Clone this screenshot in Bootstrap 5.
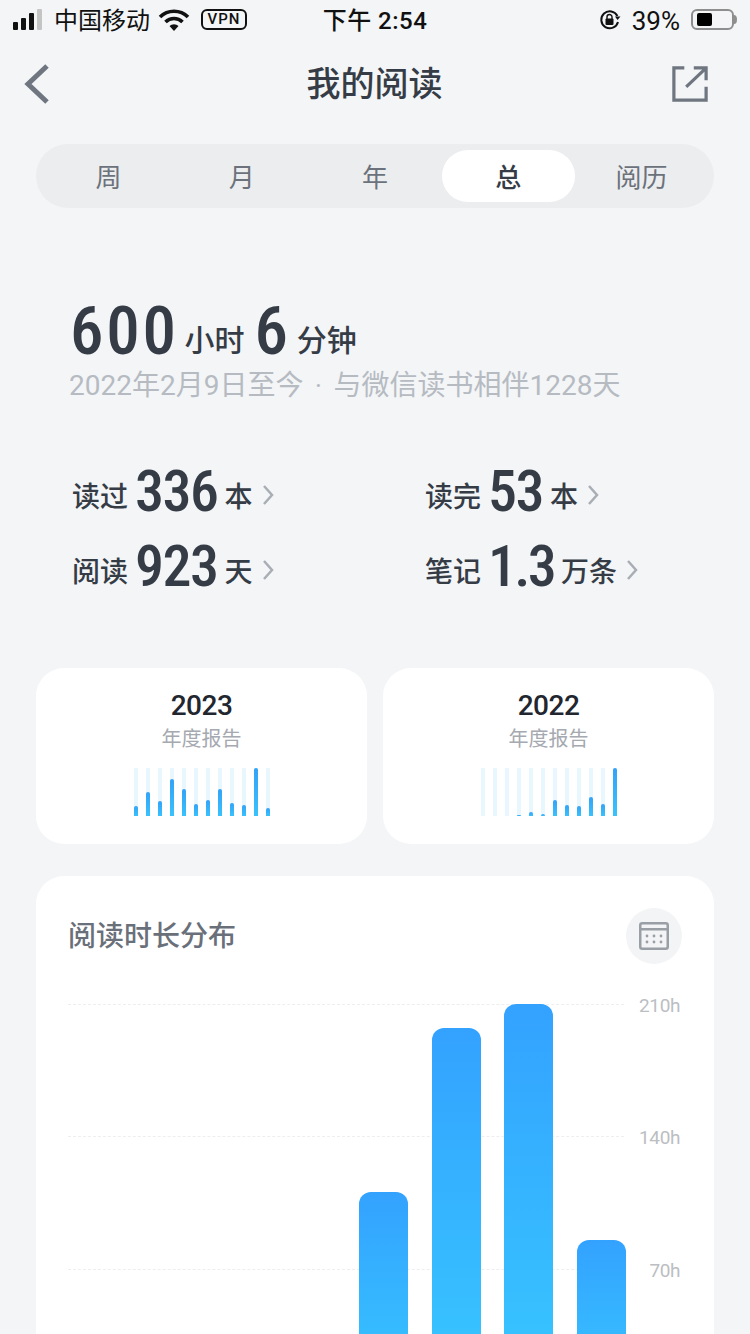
<!DOCTYPE html>
<html lang="zh-CN">
  <head>
    <meta charset="UTF-8" />
    <meta name="viewport" content="width=device-width, initial-scale=1.0" />
    <link rel="stylesheet" href="https://cdn.jsdelivr.net/npm/bootstrap@5.3.0/dist/css/bootstrap.min.css" />
    <title>我的阅读</title>
    <style>
      body {
        width: 750px;
        height: 1334px;
        overflow: hidden;
        background: #f3f5f7;
        color: #353c46;
        font-family: Roboto, "Noto Sans CJK SC", sans-serif;
      }
      .status-bar {
        height: 40px;
        padding: 0 13px 1px;
        color: #111;
        font-size: 24px;
      }
      .status-bar span, .clock { padding-top: 2px; }
      .status-side { width: 270px; }
      .signal { height: 21px; gap: 3px; }
      .signal i { width: 5px; background: #111; border-radius: 1px; }
      .signal i:last-child { background: #c4c4c4; }
      .status-bar .vpn {
        border: 2px solid #111;
        border-radius: 6px;
        font-size: 15px;
        font-weight: 500;
        letter-spacing: 1px;
        width: 46px;
        height: 21px;
        line-height: 17px;
        padding: 0;
        margin-left: 11px;
      }
      .clock { font-weight: 500; letter-spacing: 0.5px; }
      .pct { font-size: 26px; line-height: 30px; margin-left: 11px; margin-right: 11px; }
      .battery {
        width: 43px;
        height: 21px;
        border: 2px solid #8e8e8e;
        border-radius: 6px;
        padding: 2px 2px 2px 4px;
      }
      .battery i { display: block; width: 15px; height: 13px; background: #000; border-radius: 2px; }
      .top-nav { height: 84px; padding: 4px 42px 0; }
      .back-icon { margin-left: -18px; margin-right: 27px; }
      .top-title { font-size: 34px; font-weight: 500; }
      .segments {
        margin: 20px 36px 0;
        height: 64px;
        padding: 6px;
        border-radius: 32px;
        background: #ebedef;
      }
      .segments div {
        flex: 1;
        height: 52px;
        font-size: 26px;
        color: #6c727b;
        line-height: 56px;
        text-align: center;
        border-radius: 26px;
      }
      .segments .on { background: #fff; color: #353c46; font-weight: 500; }
      .hero { padding: 89px 0 0 69px; }
      .hero-line { height: 68px; line-height: 68px; white-space: nowrap; }
      .hero-num {
        font-size: 67px;
        font-weight: 500;
        font-stretch: 83%;
        letter-spacing: 2.7px;
        margin-left: 1px;
      }
      .hero-unit {
        font-size: 30px;
        font-weight: 500;
        vertical-align: 3px;
        margin: 0 9px 0 6px;
      }
      .hero-sub { font-size: 28px; line-height: 42px; color: #b6bbc2; white-space: nowrap; }
      .hero-sub em { font-style: normal; }
      .hero-dot { display: inline-block; width: 30px; text-align: center; }
      .stats {
        display: grid;
        grid-template-columns: 353px auto;
        row-gap: 16.5px;
        padding: 55px 0 0 72px;
      }
      .stat { height: 58px; line-height: 58px; white-space: nowrap; }
      .stat span { font-size: 28px; font-weight: 500; vertical-align: 4px; }
      .stat b {
        font-size: 58px;
        font-weight: 500;
        font-stretch: 75%;
        letter-spacing: -1.5px;
        margin: 0 7px 0 7px;
      }
      .stat b.tight { letter-spacing: -2.7px; }
      .stat svg { margin-left: 9px; vertical-align: 6px; }
      .reports { padding: 0 36px; margin-top: 73px; gap: 16px; }
      .report {
        flex: 1;
        height: 176px;
        border-radius: 28px;
        background: #fff;
        padding-top: 20px;
      }
      .report-year { font-size: 28px; font-weight: 500; font-stretch: 95%; line-height: 36px; color: #22262e; letter-spacing: -0.5px; }
      .report-tag { font-size: 20px; line-height: 30px; color: #a5a9b0; }
      .mini { height: 48px; margin-top: 14px; gap: 8px; }
      .mini i { width: 4px; background: #e8f6fe; display: flex; align-items: flex-end; }
      .mini u { display: block; width: 4px; border-radius: 2px 2px 0 0; background: linear-gradient(#33a2f8, #38c2fd); }
      .dist {
        margin: 32px 36px 0;
        height: 526px;
        border-radius: 28px;
        background: #fff;
        padding: 32px 32px 0;
      }
      .dist-title { font-size: 28px; font-weight: 500; color: #6a707a; padding-top: 3px; }
      .cal-btn { width: 56px; height: 56px; border-radius: 50%; background: #f3f4f6; }
      .plot { margin-top: 40px; height: 398px; }
      .axis { position: absolute; inset: 0 0 auto 0; }
      .axis-row { height: 132.5px; gap: 14px; color: #bbbec3; font-size: 19px; line-height: 2px; }
      .axis-row hr { flex: 1; margin: 0; border: 0; border-top: 1px dashed #eceef0; opacity: 1; }
      .axis-row span { width: 44px; padding-right: 2px; padding-top: 1px; letter-spacing: -0.4px; }
      .plot-bars { width: 558px; height: 398px; position: relative; }
      .plot-bars i {
        width: 49px;
        border-radius: 12px 12px 0 0;
        background: linear-gradient(#33a2ff, #38c8ff);
      }
    </style>
  </head>
  <body>
    <div class="status-bar d-flex align-items-center justify-content-between">
      <div class="status-side d-flex align-items-center">
        <div class="signal d-flex align-items-end">
          <i style="height: 8px"></i><i style="height: 12px"></i><i style="height: 17px"></i><i style="height: 21px"></i>
        </div>
        <span class="ms-2 ps-1">中国移动</span>
        <svg class="ms-2" width="32" height="22" viewBox="0 0 32 22">
          <path d="M2 8 A20 20 0 0 1 30 8" fill="none" stroke="#111" stroke-width="3.6" />
          <path d="M7.5 13 A12 12 0 0 1 24.5 13" fill="none" stroke="#111" stroke-width="3.6" />
          <path d="M11.5 17 A6.5 6.5 0 0 1 20.5 17 L16 22 Z" fill="#111" />
        </svg>
        <span class="vpn text-center">VPN</span>
      </div>
      <div class="clock">下午 2:54</div>
      <div class="status-side d-flex align-items-center justify-content-end">
        <svg width="22" height="22" viewBox="0 0 22 22">
          <path d="M19 13 A8.5 8.5 0 1 1 18.4 7" fill="none" stroke="#111" stroke-width="2" />
          <path d="M21.5 7.5 L16 7.5 L18.5 11 Z" fill="#111" />
          <rect x="6.5" y="9.5" width="8" height="6.5" rx="1" fill="#111" />
          <path d="M8 10 V8 A2.5 2.5 0 0 1 13 8 V10" fill="none" stroke="#111" stroke-width="1.4" />
        </svg>
        <span class="pct">39%</span>
        <div class="battery"><i></i></div>
        <svg width="3" height="9" viewBox="0 0 3 9"><path d="M0 0 A3 4.5 0 0 1 0 9 Z" fill="#8e8e8e" /></svg>
      </div>
    </div>

    <div class="top-nav d-flex align-items-center justify-content-between">
      <svg class="back-icon" width="26" height="40" viewBox="0 0 26 40">
        <path d="M23 2 L4 20 L23 38" fill="none" stroke="#6f7680" stroke-width="5" />
      </svg>
      <div class="top-title">我的阅读</div>
      <svg width="36" height="36" viewBox="0 0 38 38">
        <path d="M13 2 H2 V36 H36 V22" fill="none" stroke="#6f7680" stroke-width="3.4" />
        <path d="M15 22 L35 3 M23 2 H36 V15" fill="none" stroke="#6f7680" stroke-width="3.4" />
      </svg>
    </div>

    <div class="segments d-flex">
      <div>周</div>
      <div>月</div>
      <div>年</div>
      <div class="on">总</div>
      <div>阅历</div>
    </div>

    <div class="hero">
      <div class="hero-line"><span class="hero-num">600</span><span class="hero-unit">小时</span><span class="hero-num">6</span><span class="hero-unit">分钟</span></div>
      <div class="hero-sub"><em>2022</em>年<em>2</em>月<em>9</em>日至今<span class="hero-dot">·</span>与微信读书相伴<em>1228</em>天</div>
    </div>

    <div class="stats">
      <div class="stat"><span>读过</span><b>336</b><span>本</span><svg width="12" height="20" viewBox="0 0 12 20"><path d="M2 1 L10 10 L2 19" fill="none" stroke="#a9aeb5" stroke-width="2.5" /></svg></div>
      <div class="stat"><span>读完</span><b>53</b><span>本</span><svg width="12" height="20" viewBox="0 0 12 20"><path d="M2 1 L10 10 L2 19" fill="none" stroke="#a9aeb5" stroke-width="2.5" /></svg></div>
      <div class="stat"><span>阅读</span><b>923</b><span>天</span><svg width="12" height="20" viewBox="0 0 12 20"><path d="M2 1 L10 10 L2 19" fill="none" stroke="#a9aeb5" stroke-width="2.5" /></svg></div>
      <div class="stat"><span>笔记</span><b class="tight">1.3</b><span>万条</span><svg width="12" height="20" viewBox="0 0 12 20"><path d="M2 1 L10 10 L2 19" fill="none" stroke="#a9aeb5" stroke-width="2.5" /></svg></div>
    </div>

    <div class="reports d-flex">
      <div class="report text-center">
        <div class="report-year">2023</div>
        <div class="report-tag">年度报告</div>
        <div class="mini d-flex justify-content-center" data-bars="10,24,15,37,27,12,16,27,13,11,48,8"></div>
      </div>
      <div class="report text-center">
        <div class="report-year">2022</div>
        <div class="report-tag">年度报告</div>
        <div class="mini d-flex justify-content-center" data-bars="0,0,0,1,4,2,16,11,10,19,12,48"></div>
      </div>
    </div>

    <div class="dist">
      <div class="d-flex align-items-center justify-content-between">
        <div class="dist-title">阅读时长分布</div>
        <div class="cal-btn d-flex align-items-center justify-content-center">
          <svg width="30" height="28" viewBox="0 0 30 28">
            <rect x="1.25" y="1.25" width="27.5" height="25.5" rx="2" fill="none" stroke="#9a9fa6" stroke-width="2.5" />
            <rect x="1" y="6" width="28" height="2.5" fill="#9a9fa6" />
            <g fill="#9a9fa6">
              <circle cx="8" cy="14" r="1.4" /><circle cx="15" cy="14" r="1.4" /><circle cx="22" cy="14" r="1.4" />
              <circle cx="8" cy="20" r="1.4" /><circle cx="15" cy="20" r="1.4" /><circle cx="22" cy="20" r="1.4" />
            </g>
          </svg>
        </div>
      </div>
      <div class="plot position-relative">
        <div class="axis">
          <div class="axis-row d-flex align-items-start"><hr /><span class="text-end">210h</span></div>
          <div class="axis-row d-flex align-items-start"><hr /><span class="text-end">140h</span></div>
          <div class="axis-row d-flex align-items-start"><hr /><span class="text-end">70h</span></div>
        </div>
        <div class="plot-bars d-flex align-items-end justify-content-between">
          <i></i><i></i><i></i><i></i>
          <i style="height: 210px"></i><i style="height: 374px"></i><i style="height: 398px"></i><i style="height: 162px"></i>
        </div>
      </div>
    </div>

    <script src="https://cdn.jsdelivr.net/npm/bootstrap@5.3.0/dist/js/bootstrap.bundle.min.js"></script>
    <script>
      // mini charts in the two report cards
      document.querySelectorAll(".mini").forEach(function (box) {
        box.innerHTML = box.dataset.bars
          .split(",")
          .map((h) => '<i><u style="height:' + h + 'px"></u></i>')
          .join("");
      });
    </script>
  </body>
</html>
